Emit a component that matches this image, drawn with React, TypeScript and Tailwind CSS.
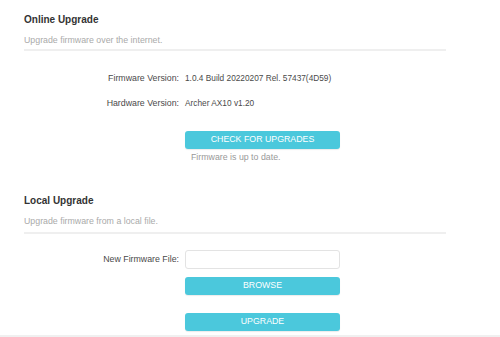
import React from "react";

const font = { fontFamily: '"Liberation Sans", Arial, sans-serif' };

function Row({ label, children }: { label: string; children: React.ReactNode }) {
  return (
    <div className="flex items-center">
      <div className="w-[161px] shrink-0 text-right pr-[6px] text-[8.8px] text-[#4a4a4a]">{label}</div>
      <div className="text-[8.3px] text-[#4a4a4a]">{children}</div>
    </div>
  );
}

function Btn({ children }: { children: React.ReactNode }) {
  return (
    <div className="w-[155px] h-[18px] rounded-[3px] bg-[#4bc8dc] text-white text-[8.8px] flex items-center justify-center shadow-[0_1px_1px_rgba(0,0,0,0.08)]">
      {children}
    </div>
  );
}

export default function App() {
  return (
    <div className="w-[500px] h-[337px] bg-white overflow-hidden flex flex-col" style={font}>
      <div className="pl-[24px] w-[446px]">
        <div className="pt-[13px] h-[27px] leading-[14px] text-[10px] font-bold text-[#333]">Online Upgrade</div>
        <div className="mt-[7px] h-[12px] leading-[12px] text-[8.8px] text-[#aaaaaa]">Upgrade firmware over the internet.</div>
        <div className="mt-[3px] h-[2px] bg-[#efefef]" />
        <div className="mt-[21px] h-[12px] leading-[12px]">
          <Row label="Firmware Version:">1.0.4 Build 20220207 Rel. 57437(4D59)</Row>
        </div>
        <div className="mt-[13px] h-[12px] leading-[12px]">
          <Row label="Hardware Version:">Archer AX10 v1.20</Row>
        </div>
        <div className="mt-[22px] flex">
          <div className="w-[161px] shrink-0" />
          <div className="flex flex-col">
            <Btn>CHECK FOR UPGRADES</Btn>
            <div className="mt-[2px] pl-[6px] h-[12px] leading-[12px] text-[8.8px] text-[#999]">Firmware is up to date.</div>
          </div>
        </div>
        <div className="mt-[31px] h-[14px] leading-[14px] text-[10px] font-bold text-[#333]">Local Upgrade</div>
        <div className="mt-[7px] h-[12px] leading-[12px] text-[8.8px] text-[#aaaaaa]">Upgrade firmware from a local file.</div>
        <div className="mt-[5px] h-[2px] bg-[#efefef]" />
        <div className="mt-[16px] flex items-center">
          <div className="w-[161px] shrink-0 text-right pr-[6px] text-[8.8px] text-[#4a4a4a]">New Firmware File:</div>
          <div className="w-[155px] h-[19px] rounded-[3px] border border-[#e3e3e3] bg-white" />
        </div>
        <div className="mt-[8px] flex">
          <div className="w-[161px] shrink-0" />
          <Btn>BROWSE</Btn>
        </div>
        <div className="mt-[18px] flex">
          <div className="w-[161px] shrink-0" />
          <Btn>UPGRADE</Btn>
        </div>
      </div>
      <div className="mt-[4px] flex-1 border-t-2 border-[#f0f0f0] bg-white" />
    </div>
  );
}
